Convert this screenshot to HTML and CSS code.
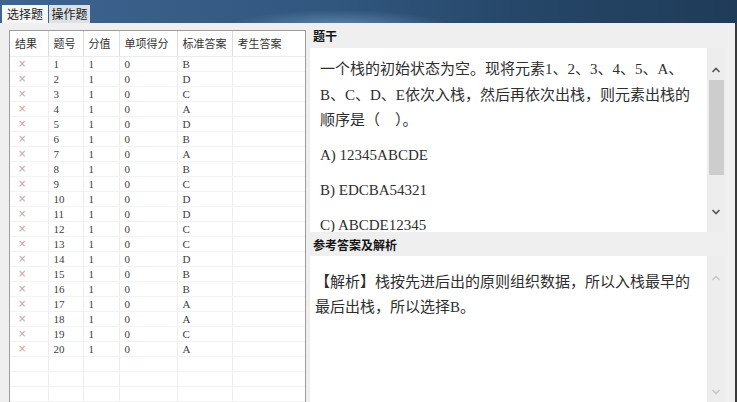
FILE: index.html
```html
<!DOCTYPE html>
<html>
<head>
<meta charset="utf-8">
<link rel="stylesheet" href="styles.css">
</head>
<body>
<div class="app">
  <div class="topbar">
    <div class="tab active">选择题</div>
    <div class="tab inactive">操作题</div>
  </div>
  <div class="main">
    <div class="left">
      <div class="grid-box">
        <table class="grid">
          <colgroup>
            <col class="c1"><col class="c2"><col class="c3"><col class="c4"><col class="c5"><col class="c6">
          </colgroup>
          <thead>
            <tr><th>结果</th><th>题号</th><th>分值</th><th>单项得分</th><th>标准答案</th><th>考生答案</th></tr>
          </thead>
          <tbody>
            <tr><td class="x">×</td><td>1</td><td>1</td><td>0</td><td>B</td><td></td></tr>
            <tr><td class="x">×</td><td>2</td><td>1</td><td>0</td><td>D</td><td></td></tr>
            <tr><td class="x">×</td><td>3</td><td>1</td><td>0</td><td>C</td><td></td></tr>
            <tr><td class="x">×</td><td>4</td><td>1</td><td>0</td><td>A</td><td></td></tr>
            <tr><td class="x">×</td><td>5</td><td>1</td><td>0</td><td>D</td><td></td></tr>
            <tr><td class="x">×</td><td>6</td><td>1</td><td>0</td><td>B</td><td></td></tr>
            <tr><td class="x">×</td><td>7</td><td>1</td><td>0</td><td>A</td><td></td></tr>
            <tr><td class="x">×</td><td>8</td><td>1</td><td>0</td><td>B</td><td></td></tr>
            <tr><td class="x">×</td><td>9</td><td>1</td><td>0</td><td>C</td><td></td></tr>
            <tr><td class="x">×</td><td>10</td><td>1</td><td>0</td><td>D</td><td></td></tr>
            <tr><td class="x">×</td><td>11</td><td>1</td><td>0</td><td>D</td><td></td></tr>
            <tr><td class="x">×</td><td>12</td><td>1</td><td>0</td><td>C</td><td></td></tr>
            <tr><td class="x">×</td><td>13</td><td>1</td><td>0</td><td>C</td><td></td></tr>
            <tr><td class="x">×</td><td>14</td><td>1</td><td>0</td><td>D</td><td></td></tr>
            <tr><td class="x">×</td><td>15</td><td>1</td><td>0</td><td>B</td><td></td></tr>
            <tr><td class="x">×</td><td>16</td><td>1</td><td>0</td><td>B</td><td></td></tr>
            <tr><td class="x">×</td><td>17</td><td>1</td><td>0</td><td>A</td><td></td></tr>
            <tr><td class="x">×</td><td>18</td><td>1</td><td>0</td><td>A</td><td></td></tr>
            <tr><td class="x">×</td><td>19</td><td>1</td><td>0</td><td>C</td><td></td></tr>
            <tr><td class="x">×</td><td>20</td><td>1</td><td>0</td><td>A</td><td></td></tr>
            <tr><td></td><td></td><td></td><td></td><td></td><td></td></tr>
            <tr><td></td><td></td><td></td><td></td><td></td><td></td></tr>
            <tr><td></td><td></td><td></td><td></td><td></td><td></td></tr>
            <tr><td></td><td></td><td></td><td></td><td></td><td></td></tr>
          </tbody>
        </table>
      </div>
    </div>
    <div class="right">
      <div class="label">题干</div>
      <div class="textbox q">
        <div class="content">
          <p>一个栈的初始状态为空。现将元素1、2、3、4、5、A、<br>B、C、D、E依次入栈，然后再依次出栈，则元素出栈的<br>顺序是（　）。</p>
          <p>A) 12345ABCDE</p>
          <p>B) EDCBA54321</p>
          <p>C) ABCDE12345</p>
        </div>
        <div class="sb">
          <svg class="arrow" width="10" height="8" viewBox="0 0 10 8"><path d="M1.5 6 L5 2.5 L8.5 6" fill="none" stroke="currentColor" stroke-width="1.6"/></svg>
          <div class="thumb"></div>
          <svg class="arrow down" width="10" height="8" viewBox="0 0 10 8"><path d="M1.5 2 L5 5.5 L8.5 2" fill="none" stroke="currentColor" stroke-width="1.6"/></svg>
        </div>
      </div>
      <div class="label label2">参考答案及解析</div>
      <div class="textbox a">
        <div class="content">
          <p>【解析】栈按先进后出的原则组织数据，所以入栈最早的<br>最后出栈，所以选择B。</p>
        </div>
        <div class="sb">
          <svg class="arrow" width="10" height="8" viewBox="0 0 10 8"><path d="M1.5 6 L5 2.5 L8.5 6" fill="none" stroke="currentColor" stroke-width="1.4"/></svg>
          <svg class="arrow down" width="10" height="8" viewBox="0 0 10 8"><path d="M1.5 2 L5 5.5 L8.5 2" fill="none" stroke="currentColor" stroke-width="1.4"/></svg>
        </div>
      </div>
    </div>
    <div class="frame"></div>
  </div>
</div>
</body>
</html>
```

FILE: styles.css
```css
* { box-sizing: border-box; }
html, body { margin: 0; padding: 0; }
body {
  width: 737px;
  height: 402px;
  overflow: hidden;
  background: #efefef;
  font-family: "Noto Sans CJK SC", sans-serif;
}
.app {
  display: flex;
  flex-direction: column;
  height: 402px;
}
.topbar {
  flex: none;
  height: 23px;
  display: flex;
  align-items: flex-end;
  gap: 1px;
  padding-left: 2px;
  background:
    radial-gradient(ellipse 110px 16px at 340px 26px, rgba(130, 170, 210, 0.55), rgba(130, 170, 210, 0) 100%),
    linear-gradient(to right, #3e6590 0%, #31577f 45%, #264769 70%, #1f3b59 100%);
}
.tab {
  height: 18px;
  font-size: 12px;
  line-height: 18px;
  color: #1a1a1a;
  text-align: center;
}
.tab.active {
  width: 46px;
  background: #f7f7f7;
}
.tab.inactive {
  width: 41px;
  background: #dde1e6;
}
.main {
  flex: 1;
  min-height: 0;
  display: flex;
}
.left {
  flex: none;
  width: 306px;
  padding: 7px 0 0 9px;
}
.grid-box {
  width: 297px;
  height: 100%;
  background: #fff;
  border: 1px solid #9c9c9c;
  border-bottom: none;
  overflow: hidden;
}
.grid {
  width: 295px;
  border-collapse: collapse;
  table-layout: fixed;
}
.c1 { width: 38px; }
.c2 { width: 35px; }
.c3 { width: 36px; }
.c4 { width: 58px; }
.c5 { width: 55px; }
.c6 { width: 73px; }
.grid th {
  height: 25px;
  font-size: 11px;
  font-weight: normal;
  color: #333;
  text-align: left;
  padding: 0 0 0 5px;
  border-right: 1px solid #dcdcdc;
  border-bottom: 1px solid #ececec;
  white-space: nowrap;
  overflow: hidden;
}
.grid th:last-child, .grid td:last-child { border-right: none; }
.grid td {
  height: 15px;
  padding: 0 0 0 5px;
  font-family: "Liberation Serif", serif;
  font-size: 11px;
  line-height: 14px;
  color: #404040;
  border-right: 1px solid #ededed;
  border-bottom: 1px solid #f3f3f3;
}
.grid td.x {
  padding-left: 8px;
  color: #c9a0a0;
  font-family: "DejaVu Sans", sans-serif;
  font-size: 10px;
}
.right {
  flex: 1;
  display: flex;
  flex-direction: column;
  padding: 0 10px 0 4px;
}
.frame {
  flex: none;
  width: 2px;
  background: #3a3a3a;
}
.label {
  flex: none;
  height: 25px;
  line-height: 25px;
  font-size: 12px;
  font-weight: bold;
  color: #151515;
  padding-left: 3px;
}
.label2 { height: 24px; }
.textbox {
  flex: none;
  display: flex;
  background: #fff;
}
.q { height: 184px; }
.a { height: 146px; }
.content {
  flex: 1;
  overflow: hidden;
  font-family: "Liberation Serif", "Noto Sans CJK SC", serif;
  font-size: 15px;
  line-height: 25.5px;
  color: #2e2e2e;
  white-space: nowrap;
}
.q .content { padding: 9px 10px 0 10px; }
.a .content { padding: 14px 5px 0 5px; line-height: 25px; }
.content p { margin: 0 0 9.5px; }
.sb {
  flex: none;
  width: 18px;
  background: #ededed;
  display: flex;
  flex-direction: column;
  align-items: center;
  color: #555;
}
.q .sb { padding: 18px 0 16px; }
.a .sb { padding: 18px 0 6px; color: #c4c4c4; }
.arrow { display: block; flex: none; }
.arrow.down { margin-top: auto; }
.thumb {
  flex: none;
  width: 15px;
  height: 95px;
  margin-top: 6px;
  background: #cdcdcd;
}
```
